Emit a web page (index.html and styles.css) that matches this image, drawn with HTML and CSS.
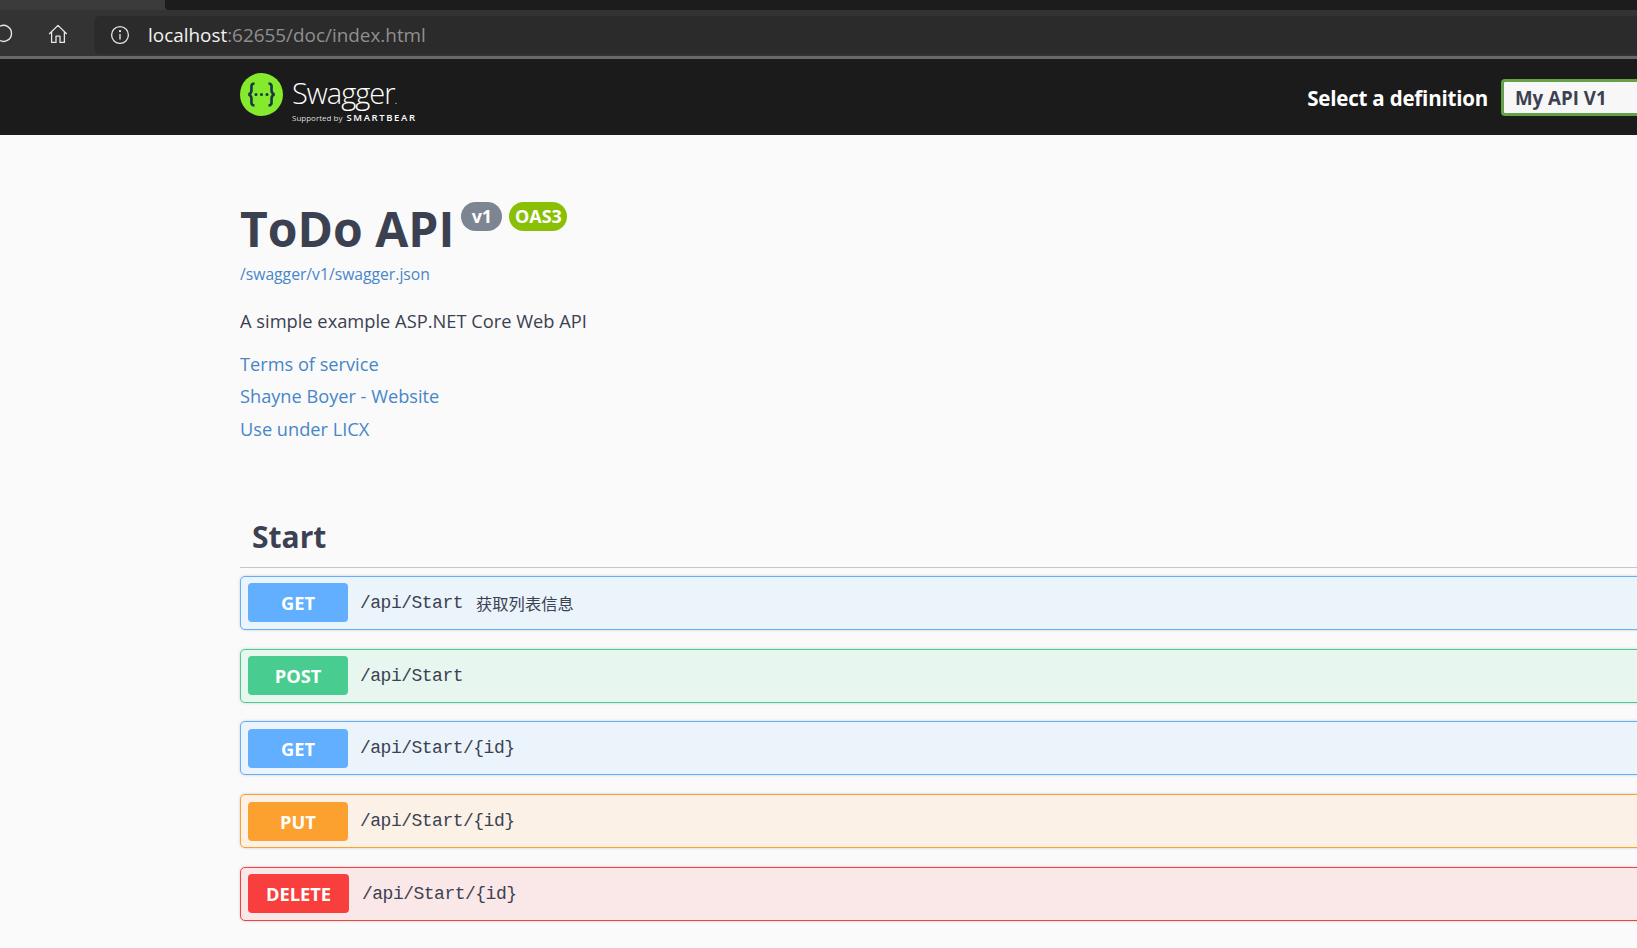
FILE: index.html
```html
<!DOCTYPE html>
<html lang="en">
<head>
    <meta charset="UTF-8">
    <meta name="viewport" content="width=device-width, initial-scale=1.0">
    <title>Swagger UI</title>
    <link rel="stylesheet" href="styles.css">
</head>
<body>
    <!-- Browser chrome -->
    <div class="tab-strip"><div class="tab-dark"></div></div>
    <div class="toolbar">
        <svg class="reload-icon" width="20" height="20" viewBox="0 0 20 20" fill="none" stroke="#e6e6e6" stroke-width="1.4">
            <path d="M3 2.2 A8 8 0 1 1 3 16.6"/>
        </svg>
        <svg class="home-icon" width="20" height="20" viewBox="0 0 20 20" fill="none" stroke="#e6e6e6" stroke-width="1.3" stroke-linejoin="round">
            <path d="M1.2 10 L10 1.4 L18.8 10 M3.6 8 V18.4 H8 V12.2 H12 V18.4 H16.4 V8"/>
        </svg>
        <div class="address-bar">
            <svg class="info-icon" width="20" height="20" viewBox="0 0 20 20" fill="none" stroke="#e6e6e6" stroke-width="1.3">
                <circle cx="10" cy="10" r="8.4"/>
                <path d="M10 9 V14.4"/>
                <circle cx="10" cy="6.2" r="0.5" fill="#e6e6e6"/>
            </svg>
            <span class="url"><span class="url-host">localhost</span>:62655/doc/index.html</span>
        </div>
    </div>

    <!-- Swagger top bar -->
    <header class="topbar">
        <div class="logo">
            <svg class="logo-mark" width="43" height="43" viewBox="0 0 43 43">
                <circle cx="21.5" cy="21.5" r="21.5" fill="#85ea2d"/>
                <path d="M14.5 10.5 C10.5 10.5 11.5 14 11.5 17 C11.5 19.5 10.5 21 8.5 21.5 C10.5 22 11.5 23.5 11.5 26 C11.5 29 10.5 32.5 14.5 32.5" fill="none" stroke="#173647" stroke-width="2.6"/>
                <path d="M28.5 10.5 C32.5 10.5 31.5 14 31.5 17 C31.5 19.5 32.5 21 34.5 21.5 C32.5 22 31.5 23.5 31.5 26 C31.5 29 32.5 32.5 28.5 32.5" fill="none" stroke="#173647" stroke-width="2.6"/>
                <circle cx="16" cy="21.5" r="1.5" fill="#173647"/>
                <circle cx="21.5" cy="21.5" r="1.5" fill="#173647"/>
                <circle cx="27" cy="21.5" r="1.5" fill="#173647"/>
            </svg>
            <div class="logo-text">
                <div class="logo-name">Swagger<span class="logo-dot">.</span></div>
                <div class="logo-sub"><span class="logo-by">Supported by</span> <span class="logo-sb">SMARTBEAR</span></div>
            </div>
        </div>
        <div class="definition">
            <span class="definition-label">Select a definition</span>
            <div class="definition-select">My API V1</div>
        </div>
    </header>

    <div class="wrapper">
        <div class="info">
            <div class="title-row">
                <h1>ToDo API</h1>
                <span class="badge badge-version">v1</span>
                <span class="badge badge-oas">OAS3</span>
            </div>
            <a class="spec-link" href="#">/swagger/v1/swagger.json</a>
            <p class="description">A simple example ASP.NET Core Web API</p>
            <div class="info-links">
                <a href="#">Terms of service</a>
                <a href="#">Shayne Boyer - Website</a>
                <a href="#">Use under LICX</a>
            </div>
        </div>

        <h2 class="tag">Start</h2>

        <div class="opblock opblock-get">
            <span class="method">GET</span>
            <span class="path">/api/Start</span>
            <span class="summary">获取列表信息</span>
        </div>
        <div class="opblock opblock-post">
            <span class="method">POST</span>
            <span class="path">/api/Start</span>
        </div>
        <div class="opblock opblock-get">
            <span class="method">GET</span>
            <span class="path">/api/Start/{id}</span>
        </div>
        <div class="opblock opblock-put">
            <span class="method">PUT</span>
            <span class="path">/api/Start/{id}</span>
        </div>
        <div class="opblock opblock-delete">
            <span class="method">DELETE</span>
            <span class="path">/api/Start/{id}</span>
        </div>
    </div>
</body>
</html>
```

FILE: styles.css
```css
* {
    margin: 0;
    padding: 0;
    box-sizing: border-box;
}

html, body {
    height: 948px;
    overflow: hidden;
}

body {
    font-family: "Open Sans", "Noto Sans", sans-serif;
    background: #fafafa;
    color: #3b4151;
}

a {
    color: #4786c8;
    text-decoration: none;
}

/* Browser chrome */
.tab-strip {
    height: 10px;
    background: #3b3b3b;
    padding-left: 165px;
}

.tab-dark {
    height: 10px;
    background: #1c1c1c;
    border-bottom-left-radius: 4px;
}

.toolbar {
    height: 49px;
    background: #333;
    border-bottom: 3px solid #686868;
    display: flex;
    align-items: flex-start;
}

.reload-icon {
    margin: 14px 0 0 -3px;
}

.home-icon {
    margin: 14px 0 0 31px;
}

.address-bar {
    flex: 1;
    height: 38px;
    margin: 6px 0 0 26px;
    padding-left: 16px;
    background: #2b2b2b;
    border-radius: 6px 0 0 6px;
    display: flex;
    align-items: center;
}

.url {
    margin-left: 18px;
    font-size: 18.9px;
    color: #8f8f8f;
}

.url-host {
    color: #f2f2f2;
}

/* Swagger top bar */
.topbar {
    height: 76px;
    background: #1b1b1b;
    padding: 14px 0 0 240px;
    display: flex;
    justify-content: space-between;
}

.logo {
    display: flex;
    align-items: flex-start;
    gap: 9px;
}

.logo-text {
    color: #fff;
}

.logo-name {
    margin-top: 2px;
    font-size: 29px;
    line-height: 36px;
    letter-spacing: -1px;
    font-weight: 300;
}

.logo-dot {
    font-size: 12px;
    line-height: 1;
}

.logo-sub {
    margin-top: -2px;
    line-height: 12px;
    white-space: nowrap;
}

.logo-by {
    font-size: 8px;
    color: #ddd;
}

.logo-sb {
    font-size: 9.5px;
    font-weight: 600;
    letter-spacing: 1.6px;
}

.definition {
    display: flex;
    align-items: center;
    gap: 13px;
    height: 37px;
    margin-top: 6px;
    margin-right: -104px;
}

.definition-label {
    font-size: 20.5px;
    letter-spacing: -0.2px;
    font-weight: 700;
    color: #fff;
}

.definition-select {
    width: 240px;
    height: 37px;
    border: 3px solid #67a04a;
    border-radius: 4px;
    background: #f7f7f7;
    padding-left: 11px;
    font-size: 18.7px;
    font-weight: 700;
    line-height: 31px;
    color: #3b4151;
}

/* Page content */
.wrapper {
    width: 1946px;
    margin-left: 240px;
}

.info {
    padding-top: 62px;
}

.title-row {
    display: flex;
    align-items: flex-start;
    height: 64px;
}

h1 {
    font-size: 48px;
    font-weight: 700;
    line-height: 64px;
    color: #3b4151;
}

.badge {
    margin-top: 5px;
    height: 29px;
    border-radius: 15px;
    color: #fff;
    font-size: 18px;
    font-weight: 700;
    line-height: 29px;
    text-align: center;
}

.badge-version {
    width: 41px;
    margin-left: 7px;
    background: #7d8492;
}

.badge-oas {
    width: 58px;
    margin-left: 7px;
    background: #89bf04;
}

.spec-link {
    display: block;
    margin-top: 2px;
    font-size: 15.7px;
    line-height: 22px;
}

.description {
    margin-top: 22px;
    font-size: 18.3px;
    line-height: 28px;
    color: #3b4151;
}

.info-links {
    margin-top: 13px;
}

.info-links a {
    display: block;
    font-size: 18.2px;
    line-height: 32.3px;
}

.tag {
    margin-top: 70px;
    padding: 0 0 8px 12px;
    font-size: 30px;
    line-height: 44px;
    font-weight: 700;
    color: #3b4151;
    border-bottom: 1px solid #c4c6ca;
}

.opblock {
    height: 54px;
    margin-top: 8px;
    padding: 0 7px;
    border: 1px solid;
    border-radius: 5px;
    display: flex;
    align-items: center;
    box-shadow: 0 0 3px rgba(0, 0, 0, 0.19);
}

.opblock + .opblock {
    margin-top: 18.75px;
}

.method {
    min-width: 100px;
    height: 39px;
    padding: 0 8px;
    border-radius: 4px;
    color: #fff;
    font-size: 18.3px;
    font-weight: 700;
    line-height: 39px;
    text-align: center;
}

.path {
    margin-left: 12px;
    font-family: "Liberation Mono", monospace;
    font-size: 18px;
    letter-spacing: -0.5px;
    color: #3b4151;
}

.summary {
    margin-left: 13px;
    font-family: "Noto Sans CJK SC", sans-serif;
    font-size: 16.3px;
    color: #3b4151;
}

.opblock-get {
    background: #ebf3fb;
    border-color: #61affe;
}

.opblock-get .method {
    background: #61affe;
}

.opblock-post {
    background: #e8f6f0;
    border-color: #49cc90;
}

.opblock-post .method {
    background: #49cc90;
}

.opblock-put {
    background: #fbf1e6;
    border-color: #fca130;
}

.opblock-put .method {
    background: #fca130;
}

.opblock-delete {
    background: #fae7e7;
    border-color: #f93e3e;
}

.opblock-delete .method {
    min-width: 101px;
    background: #f93e3e;
}

.opblock-delete .path {
    margin-left: 13px;
}
```
